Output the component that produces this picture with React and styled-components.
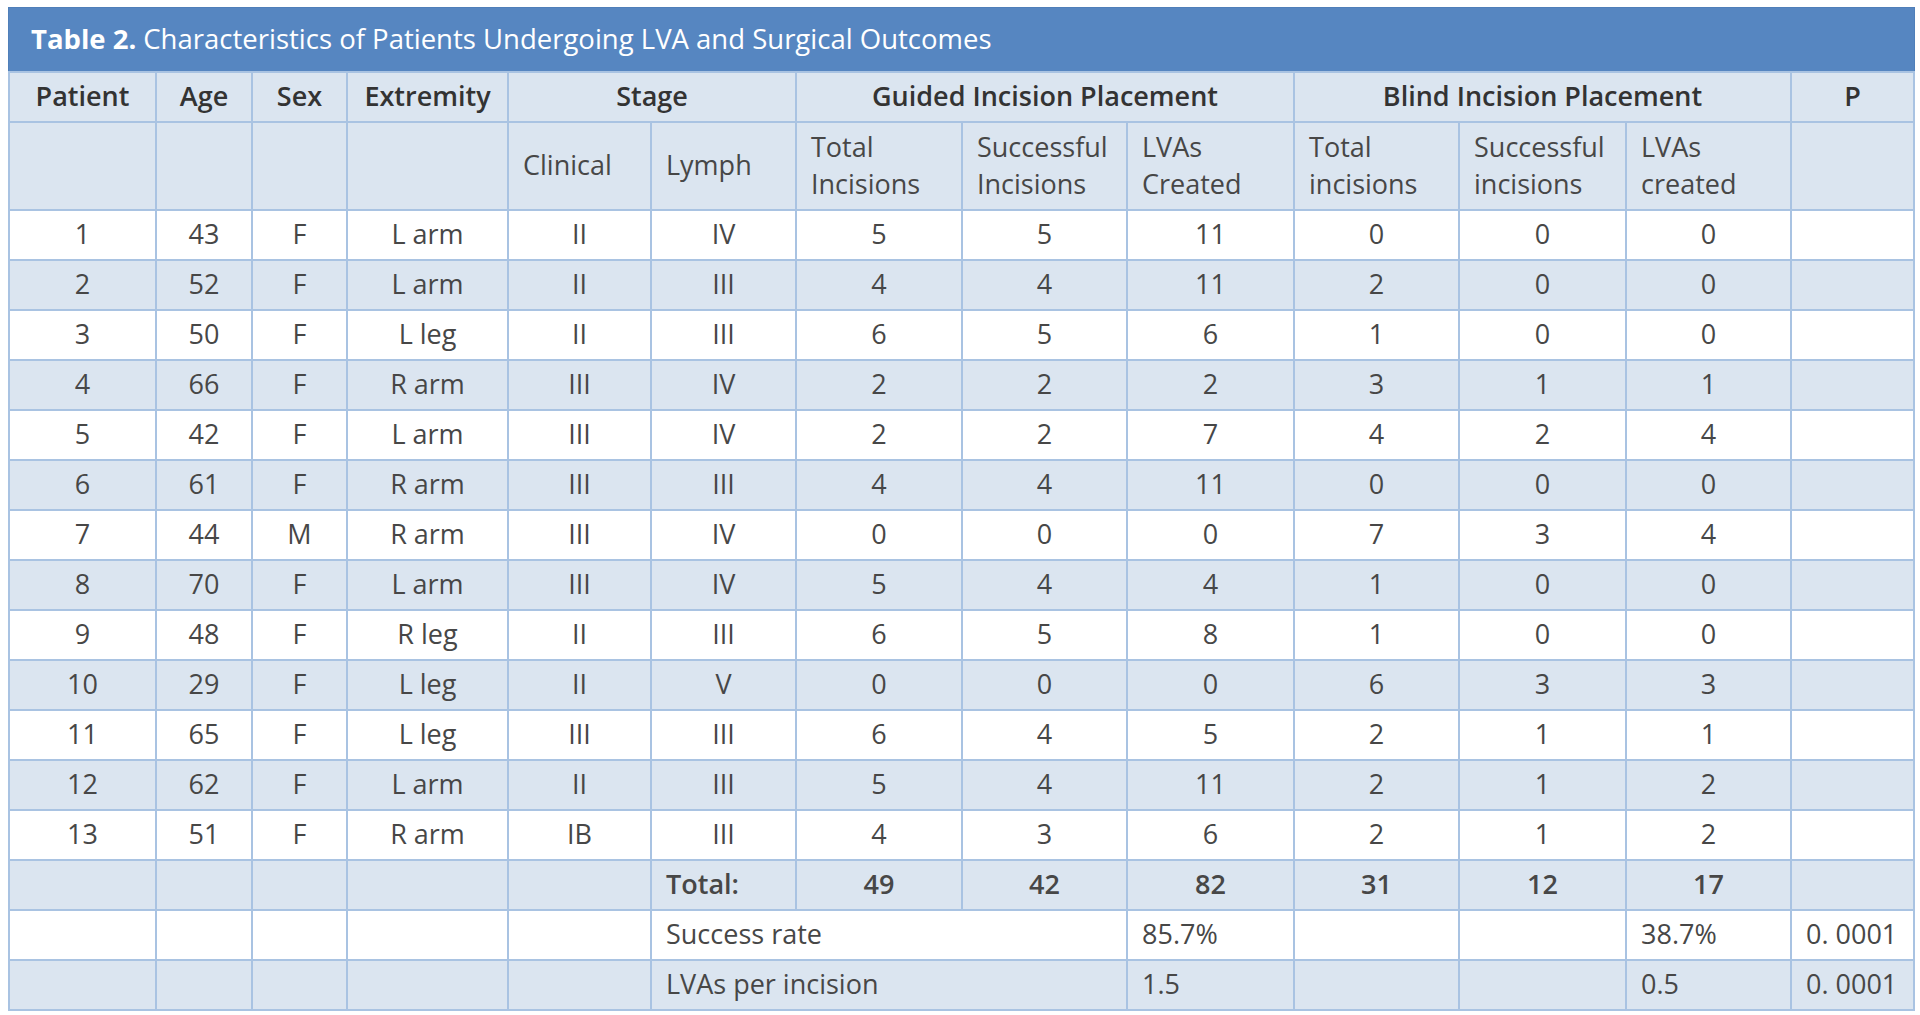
import React from 'react';
import styled, { createGlobalStyle } from 'styled-components';

const GlobalStyle = createGlobalStyle`
  body {
    margin: 7px 5px 0 8px;
    background: #fff;
    font-family: "Open Sans", "Liberation Sans", sans-serif;
    color: #3b3b3b;
  }
`;

const Wrapper = styled.div`
  width: 1907px;
`;

const TitleBar = styled.div`
  background-color: #5686c1;
  color: #fff;
  font-size: 27.5px;
  height: 64px;
  display: flex;
  align-items: center;
  padding-left: 22px;
  padding-bottom: 2px;
  border: 1px solid #4f7fb9;
  border-bottom: none;
  box-sizing: border-box;

  b {
    font-weight: 700;
    margin-right: 7px;
  }
`;

const Table = styled.table`
  width: 100%;
  border-collapse: collapse;
  table-layout: fixed;
  font-size: 27px;
`;

const Row = styled.tr`
  height: ${({ tall }) => (tall ? '88px' : '50px')};
  background-color: ${({ shade }) => (shade ? '#dbe5f0' : '#ffffff')};
`;

const HeadCell = styled.th`
  border: 2px solid #a9c3e2;
  font-weight: 600;
  color: #333;
  padding: 0 0 3px;
  text-align: center;
`;

const SubHead = styled.th`
  border: 2px solid #a9c3e2;
  font-weight: 400;
  color: #474747;
  text-align: left;
  padding: 0 14px 3px;
  line-height: 37px;
`;

const Cell = styled.td`
  border: 2px solid #a9c3e2;
  padding: ${({ left }) => (left ? '0 14px 4px' : '0 0 4px')};
  text-align: ${({ left }) => (left ? 'left' : 'center')};
  font-weight: ${({ bold }) => (bold ? 600 : 400)};
  color: #474747;
  white-space: nowrap;
`;

const widths = [147, 96, 95, 161, 143, 145, 166, 165, 167, 165, 167, 165, 123];

const rows = [
  ['1', '43', 'F', 'L arm', 'II', 'IV', '5', '5', '11', '0', '0', '0'],
  ['2', '52', 'F', 'L arm', 'II', 'III', '4', '4', '11', '2', '0', '0'],
  ['3', '50', 'F', 'L leg', 'II', 'III', '6', '5', '6', '1', '0', '0'],
  ['4', '66', 'F', 'R arm', 'III', 'IV', '2', '2', '2', '3', '1', '1'],
  ['5', '42', 'F', 'L arm', 'III', 'IV', '2', '2', '7', '4', '2', '4'],
  ['6', '61', 'F', 'R arm', 'III', 'III', '4', '4', '11', '0', '0', '0'],
  ['7', '44', 'M', 'R arm', 'III', 'IV', '0', '0', '0', '7', '3', '4'],
  ['8', '70', 'F', 'L arm', 'III', 'IV', '5', '4', '4', '1', '0', '0'],
  ['9', '48', 'F', 'R leg', 'II', 'III', '6', '5', '8', '1', '0', '0'],
  ['10', '29', 'F', 'L leg', 'II', 'V', '0', '0', '0', '6', '3', '3'],
  ['11', '65', 'F', 'L leg', 'III', 'III', '6', '4', '5', '2', '1', '1'],
  ['12', '62', 'F', 'L arm', 'II', 'III', '5', '4', '11', '2', '1', '2'],
  ['13', '51', 'F', 'R arm', 'IB', 'III', '4', '3', '6', '2', '1', '2'],
];

const App = () => (
  <Wrapper>
    <GlobalStyle />
    <TitleBar>
      <b>Table 2.</b> Characteristics of Patients Undergoing LVA and Surgical Outcomes
    </TitleBar>
    <Table>
      <colgroup>
        {widths.map((w, i) => (
          <col key={i} style={{ width: w }} />
        ))}
      </colgroup>
      <thead>
        <Row shade>
          <HeadCell>Patient</HeadCell>
          <HeadCell>Age</HeadCell>
          <HeadCell>Sex</HeadCell>
          <HeadCell>Extremity</HeadCell>
          <HeadCell colSpan={2}>Stage</HeadCell>
          <HeadCell colSpan={3}>Guided Incision Placement</HeadCell>
          <HeadCell colSpan={3}>Blind Incision Placement</HeadCell>
          <HeadCell>P</HeadCell>
        </Row>
        <Row shade tall>
          <SubHead />
          <SubHead />
          <SubHead />
          <SubHead />
          <SubHead>Clinical</SubHead>
          <SubHead>Lymph</SubHead>
          <SubHead>Total<br />Incisions</SubHead>
          <SubHead>Successful<br />Incisions</SubHead>
          <SubHead>LVAs<br />Created</SubHead>
          <SubHead>Total<br />incisions</SubHead>
          <SubHead>Successful<br />incisions</SubHead>
          <SubHead>LVAs<br />created</SubHead>
          <SubHead />
        </Row>
      </thead>
      <tbody>
        {rows.map((r, i) => (
          <Row key={i} shade={i % 2 === 1}>
            {r.map((v, j) => (
              <Cell key={j}>{v}</Cell>
            ))}
            <Cell />
          </Row>
        ))}
        <Row shade>
          <Cell />
          <Cell />
          <Cell />
          <Cell />
          <Cell />
          <Cell left bold>Total:</Cell>
          <Cell bold>49</Cell>
          <Cell bold>42</Cell>
          <Cell bold>82</Cell>
          <Cell bold>31</Cell>
          <Cell bold>12</Cell>
          <Cell bold>17</Cell>
          <Cell />
        </Row>
        <Row>
          <Cell />
          <Cell />
          <Cell />
          <Cell />
          <Cell />
          <Cell left colSpan={3}>Success rate</Cell>
          <Cell left>85.7%</Cell>
          <Cell />
          <Cell />
          <Cell left>38.7%</Cell>
          <Cell left>0. 0001</Cell>
        </Row>
        <Row shade>
          <Cell />
          <Cell />
          <Cell />
          <Cell />
          <Cell />
          <Cell left colSpan={3}>LVAs per incision</Cell>
          <Cell left>1.5</Cell>
          <Cell />
          <Cell />
          <Cell left>0.5</Cell>
          <Cell left>0. 0001</Cell>
        </Row>
      </tbody>
    </Table>
  </Wrapper>
);

export default App;
